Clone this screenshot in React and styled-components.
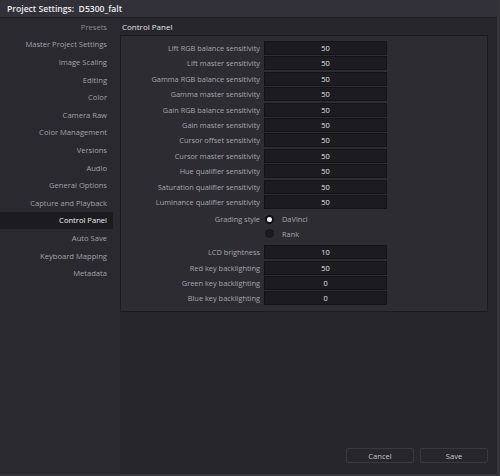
import React from "react";
import styled, { createGlobalStyle } from "styled-components";

const GlobalStyle = createGlobalStyle`
  html, body {
    margin: 0;
    padding: 0;
    background: #27262d;
  }
  * {
    box-sizing: border-box;
  }
`;

const menu = [
  "Presets",
  "Master Project Settings",
  "Image Scaling",
  "Editing",
  "Color",
  "Camera Raw",
  "Color Management",
  "Versions",
  "Audio",
  "General Options",
  "Capture and Playback",
  "Control Panel",
  "Auto Save",
  "Keyboard Mapping",
  "Metadata",
];

const sensitivity = [
  "Lift RGB balance sensitivity",
  "Lift master sensitivity",
  "Gamma RGB balance sensitivity",
  "Gamma master sensitivity",
  "Gain RGB balance sensitivity",
  "Gain master sensitivity",
  "Cursor offset sensitivity",
  "Cursor master sensitivity",
  "Hue qualifier sensitivity",
  "Saturation qualifier sensitivity",
  "Luminance qualifier sensitivity",
];

const keys = [
  ["LCD brightness", "10"],
  ["Red key backlighting", "50"],
  ["Green key backlighting", "0"],
  ["Blue key backlighting", "0"],
];

export default function App() {
  return (
    <>
      <GlobalStyle />
      <Window>
        <TitleBar>Project Settings:&nbsp; D5300_falt</TitleBar>
        <Body>
          <Sidebar>
            {menu.map((item) => (
              <MenuItem key={item} active={item === "Control Panel"} dim={item === "Presets"}>
                {item}
              </MenuItem>
            ))}
          </Sidebar>
          <Main>
            <Heading>Control Panel</Heading>
            <Panel>
              {sensitivity.map((label) => (
                <Row key={label}>
                  <Label>{label}</Label>
                  <Field>50</Field>
                </Row>
              ))}
              <RadioGroup>
                <RadioRow>
                  <Label>Grading style</Label>
                  <Radio checked />
                  <RadioText>DaVinci</RadioText>
                </RadioRow>
                <RadioRow>
                  <span />
                  <Radio />
                  <RadioText>Rank</RadioText>
                </RadioRow>
              </RadioGroup>
              {keys.map(([label, value]) => (
                <Row key={label}>
                  <Label>{label}</Label>
                  <Field>{value}</Field>
                </Row>
              ))}
            </Panel>
            <Footer>
              <Button>Cancel</Button>
              <Button>Save</Button>
            </Footer>
          </Main>
        </Body>
      </Window>
    </>
  );
}

const Window = styled.div`
  width: 500px;
  height: 476px;
  display: flex;
  flex-direction: column;
  background: #27262d;
  border-right: 3px solid #35343b;
  border-bottom: 2px solid #35343b;
  font-family: "Open Sans", "Noto Sans", sans-serif;
  overflow: hidden;
`;

const TitleBar = styled.div`
  height: 18px;
  flex-shrink: 0;
  padding-left: 7px;
  display: flex;
  align-items: center;
  background: #323139;
  border-bottom: 1px solid #1d1c22;
  color: #ececee;
  font-size: 8.6px;
  font-weight: 600;
`;

const Body = styled.div`
  flex: 1;
  display: flex;
  min-height: 0;
`;

const Sidebar = styled.div`
  width: 120px;
  flex-shrink: 0;
  background: #2a2930;
  display: flex;
  flex-direction: column;
`;

const MenuItem = styled.div`
  width: 113px;
  height: 17.6px;
  padding-right: 6px;
  display: flex;
  align-items: center;
  justify-content: flex-end;
  font-size: 7.6px;
  color: ${(p) => (p.active ? "#f2f2f4" : p.dim ? "#8e8d93" : "#a3a2a8")};
  background: ${(p) => (p.active ? "#1c1b20" : "transparent")};
`;

const Main = styled.div`
  flex: 1;
  display: flex;
  flex-direction: column;
  padding-right: 9px;
`;

const Heading = styled.div`
  height: 17px;
  padding-left: 2px;
  display: flex;
  align-items: center;
  color: #e4e4e6;
  font-size: 8px;
`;

const Panel = styled.div`
  width: 368px;
  padding: 5px 0 6px;
  background: #2d2c33;
  border: 1px solid #1b1a20;
  display: flex;
  flex-direction: column;
  gap: 1.4px;
`;

const Row = styled.div`
  display: grid;
  grid-template-columns: 139px 123px;
  column-gap: 4px;
  align-items: center;
  height: 14px;
`;

const Label = styled.span`
  text-align: right;
  color: #a6a5ab;
  font-size: 7.4px;
  white-space: nowrap;
`;

const Field = styled.div`
  height: 14px;
  display: flex;
  align-items: center;
  justify-content: center;
  background: #1c1b20;
  border: 1px solid #141318;
  color: #e6e6e8;
  font-size: 7.4px;
`;

const RadioGroup = styled.div`
  display: flex;
  flex-direction: column;
  padding: 2px 0 3px;
`;

const RadioRow = styled.div`
  display: grid;
  grid-template-columns: 139px 9px auto;
  column-gap: 4px;
  align-items: center;
  height: 14px;
  & + & {
    margin-top: 0.5px;
  }
`;

const Radio = styled.span`
  width: 9px;
  height: 9px;
  margin-left: 1px;
  border-radius: 50%;
  background: ${(p) => (p.checked ? "#f4f4f4" : "#1c1b20")};
  border: ${(p) => (p.checked ? "2px solid #111014" : "1px solid #19181d")};
`;

const RadioText = styled.span`
  padding-left: 5px;
  color: #a6a5ab;
  font-size: 7.4px;
`;

const Footer = styled.div`
  margin-top: auto;
  margin-bottom: 11px;
  display: flex;
  justify-content: flex-end;
  gap: 6px;
`;

const Button = styled.div`
  width: 68px;
  height: 15px;
  display: flex;
  align-items: center;
  justify-content: center;
  border: 1px solid #3a3940;
  border-radius: 2px;
  color: #c4c3c8;
  font-size: 7.6px;
`;
